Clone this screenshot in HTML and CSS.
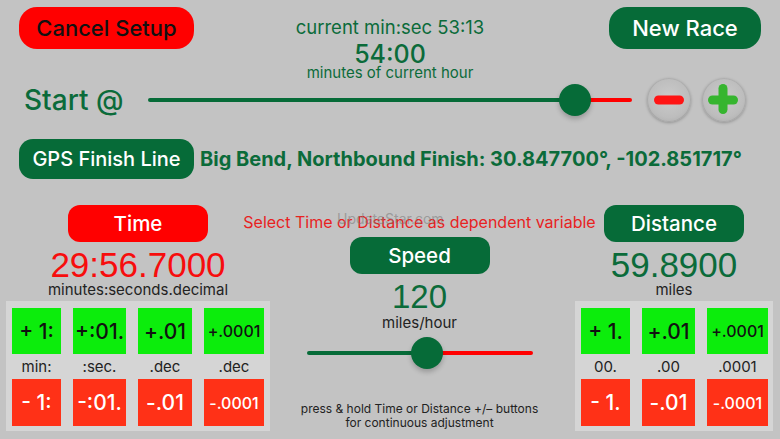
FILE: index.html
```html
<!DOCTYPE html>
<html lang="en">
<head>
<meta charset="utf-8">
<title>Race Setup</title>
<link rel="stylesheet" href="styles.css">
</head>
<body>
<div class="screen">
  <header class="top">
    <button class="pill pill-red cancel">Cancel Setup</button>
    <div class="clock">
      <div class="clock-now">current min:sec 53:13</div>
      <div class="clock-start">54:00</div>
      <div class="clock-note">minutes of current hour</div>
    </div>
    <button class="pill pill-green newrace">New Race</button>
  </header>

  <div class="start-row">
    <div class="start-label">Start @</div>
    <div class="slider start-slider">
      <div class="track">
        <div class="track-on" style="width:88.2%"></div>
        <div class="track-off"></div>
      </div>
      <div class="thumb" style="left:calc(88.2% - 16px)"></div>
    </div>
    <button class="round" aria-label="minus">
      <svg width="44" height="44" viewBox="0 0 44 44"><rect x="7" y="17.5" width="30" height="9" rx="4.5" fill="#ff1414"/></svg>
    </button>
    <button class="round" aria-label="plus">
      <svg width="44" height="44" viewBox="0 0 44 44"><rect x="6" y="17.5" width="30" height="9" rx="4.5" fill="#36b52f"/><rect x="16.5" y="6" width="9" height="30" rx="4.5" fill="#36b52f"/></svg>
    </button>
  </div>

  <div class="gps-row">
    <button class="pill pill-green gps">GPS Finish Line</button>
    <div class="gps-loc">Big Bend, Northbound Finish: 30.847700°, -102.851717°</div>
  </div>

  <section class="lower">
    <div class="col">
      <button class="seg seg-red">Time</button>
      <div class="value value-red">29:56.7000</div>
      <div class="unit">minutes:seconds.decimal</div>
      <div class="pad pad-time">
        <button class="inc">+ 1:</button>
        <button class="inc">+:01.</button>
        <button class="inc">+.01</button>
        <button class="inc small">+.0001</button>
        <span class="lbl">min:</span>
        <span class="lbl">:sec.</span>
        <span class="lbl">.dec</span>
        <span class="lbl">.dec</span>
        <button class="dec">- 1:</button>
        <button class="dec">-:01.</button>
        <button class="dec">-.01</button>
        <button class="dec small">-.0001</button>
      </div>
    </div>

    <div class="col col-mid">
      <div class="hint">Select Time or Distance as dependent variable</div>
      <button class="seg seg-green">Speed</button>
      <div class="speed-val">120</div>
      <div class="unit speed-unit">miles/hour</div>
      <div class="slider speed-slider">
        <div class="track">
          <div class="track-on" style="width:53.5%"></div>
          <div class="track-off"></div>
        </div>
        <div class="thumb" style="left:calc(53.5% - 16px)"></div>
      </div>
      <p class="tip">press &amp; hold Time or Distance +/– buttons<br>for continuous adjustment</p>
    </div>

    <div class="col">
      <button class="seg seg-green">Distance</button>
      <div class="value value-green">59.8900</div>
      <div class="unit">miles</div>
      <div class="pad pad-dist">
        <button class="inc">+ 1.</button>
        <button class="inc">+.01</button>
        <button class="inc small">+.0001</button>
        <span class="lbl">00.</span>
        <span class="lbl">.00</span>
        <span class="lbl">.0001</span>
        <button class="dec">- 1.</button>
        <button class="dec">-.01</button>
        <button class="dec small">-.0001</button>
      </div>
    </div>

    <div class="watermark">UpdateStar.com</div>
  </section>
</div>
</body>
</html>
```

FILE: styles.css
```css
* { box-sizing: border-box; }

html, body {
  margin: 0;
  padding: 0;
}

body {
  background: #c3c3c3;
  font-family: "Inter", "Liberation Sans", sans-serif;
  font-weight: 500;
  color: #222;
}

button {
  font-family: inherit;
  font-weight: inherit;
  border: none;
  padding: 0;
  margin: 0;
  cursor: pointer;
}

.screen {
  width: 780px;
  height: 439px;
  overflow: hidden;
  display: flex;
  flex-direction: column;
}

/* ---------- header ---------- */
.top {
  height: 78px;
  padding: 7px 19px 0 19px;
  display: grid;
  grid-template-columns: 1fr auto 1fr;
  align-items: start;
}

.pill {
  height: 42px;
  border-radius: 18px;
  font-size: 22px;
  line-height: 42px;
  text-align: center;
}

.pill-red { background: #ff0000; color: #111; }
.pill-green { background: #066b38; color: #fff; }

.cancel { width: 175px; justify-self: start; }
.newrace { width: 152px; justify-self: end; }

.clock {
  display: flex;
  flex-direction: column;
  align-items: center;
  color: #0b6b3a;
  padding-top: 10px;
  white-space: nowrap;
}

.clock-now { font-size: 18.5px; line-height: 20px; font-weight: 400; }
.clock-start { font-size: 25px; line-height: 24px; margin-top: 5px; }
.clock-note { font-size: 15px; line-height: 16px; margin-top: -1px; font-weight: 400; }

/* ---------- start row ---------- */
.start-row {
  height: 44px;
  display: flex;
  align-items: center;
  padding: 0 34px 0 24px;
}

.start-label {
  font-size: 28px;
  line-height: 34px;
  color: #0b6b3a;
  width: 124px;
  white-space: nowrap;
}

.slider {
  position: relative;
  height: 32px;
  display: flex;
  align-items: center;
}

.start-slider { flex: 1; margin-right: 15px; }

.track {
  width: 100%;
  height: 4px;
  display: flex;
}

.track-on { background: #066b38; border-radius: 2px 0 0 2px; }
.track-off { flex: 1; background: #ff0000; border-radius: 0 2px 2px 0; }

.thumb {
  position: absolute;
  top: 0;
  width: 32px;
  height: 32px;
  border-radius: 50%;
  background: #066b38;
  box-shadow: 0 3px 5px rgba(0, 0, 0, 0.22);
}

.round {
  width: 44px;
  height: 44px;
  border-radius: 50%;
  background: radial-gradient(circle at 50% 45%, #cbcbcb 0%, #bdbdbd 60%, #a3a3a3 100%);
  box-shadow: 0 1px 3px rgba(0, 0, 0, 0.25), inset 0 0 0 1px rgba(0, 0, 0, 0.08);
  display: flex;
  align-items: center;
  justify-content: center;
}

.round + .round { margin-left: 11px; }
.round svg { display: block; }

/* ---------- gps row ---------- */
.gps-row {
  margin-top: 17px;
  height: 40px;
  display: flex;
  align-items: center;
  padding-left: 19px;
}

.gps {
  width: 175px;
  height: 40px;
  line-height: 40px;
  border-radius: 14px;
  font-size: 20px;
}

.gps-loc {
  margin-left: 6px;
  font-size: 20px;
  font-weight: 700;
  color: #0b6b3a;
  white-space: nowrap;
}

/* ---------- lower ---------- */
.lower {
  position: relative;
  margin-top: 26px;
  padding-left: 6px;
  display: grid;
  grid-template-columns: 264px 305px 198px;
  align-items: start;
}

.col {
  display: flex;
  flex-direction: column;
  align-items: center;
}

.col-mid { padding-right: 6px; }

.seg {
  width: 140px;
  height: 37px;
  border-radius: 12px;
  font-size: 20.5px;
  line-height: 37px;
  color: #fff;
  text-align: center;
}

.seg-red { background: #ff0000; }
.seg-green { background: #066b38; }

.value {
  margin-top: 7px;
  font-family: "Liberation Sans", "Inter", sans-serif;
  font-weight: 400;
  font-size: 35px;
  line-height: 31px;
  white-space: nowrap;
}

.value-red { color: #f70d0d; }
.value-green { color: #0b6b3a; }

.unit {
  font-size: 15px;
  line-height: 18px;
  font-weight: 400;
  color: #222;
  white-space: nowrap;
}

.value + .unit { margin-top: 1px; }

.pad {
  margin-top: 2px;
  background: #d5d5d5;
  display: grid;
  grid-template-rows: 46px 25px 47px;
  column-gap: 12px;
  padding: 7px 5px 5px 6px;
  align-self: stretch;
}

.pad-time { grid-template-columns: 49px 53px 54px 60px; }
.pad-dist { grid-template-columns: 49px 53px 61px; }

.inc, .dec {
  font-size: 21px;
  text-align: center;
  white-space: nowrap;
}

.inc { background: #0ced0c; color: #111; }
.dec { background: #ff3117; color: #fff; }
.inc.small, .dec.small { font-size: 16px; }

.lbl {
  font-size: 15px;
  line-height: 25px;
  font-weight: 400;
  text-align: center;
  color: #222;
  white-space: nowrap;
}

/* ---------- middle ---------- */
.hint {
  margin-top: 7px;
  font-size: 16px;
  line-height: 20px;
  font-weight: 400;
  color: #e8221f;
  white-space: nowrap;
}

.col-mid .seg { margin-top: 5px; }

.speed-val {
  margin-top: 7px;
  font-family: "Liberation Sans", "Inter", sans-serif;
  font-weight: 400;
  font-size: 33px;
  line-height: 32px;
  color: #0b6b3a;
}

.speed-unit { margin-top: 1px; }

.speed-slider {
  margin-top: 5px;
  width: 226px;
}

.tip {
  margin: 33px 0 0 0;
  font-size: 12px;
  line-height: 14px;
  font-weight: 400;
  text-align: center;
  color: #222;
}

.watermark {
  position: absolute;
  left: 337px;
  top: 6px;
  font-size: 14px;
  line-height: 16px;
  font-weight: 400;
  color: rgba(120, 120, 120, 0.55);
  pointer-events: none;
}
```
